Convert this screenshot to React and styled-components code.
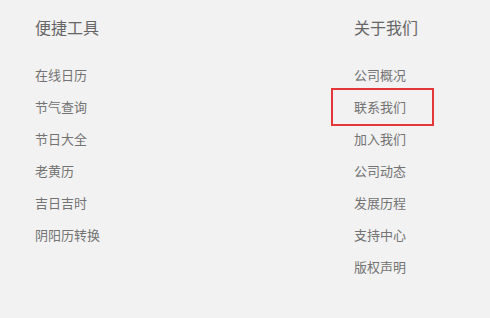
import styled, { createGlobalStyle } from "styled-components";

const GlobalStyle = createGlobalStyle`
  html, body {
    margin: 0;
    padding: 0;
    background: #f2f2f2;
  }
  body {
    font-family: "Noto Sans CJK SC", "Noto Sans", sans-serif;
  }
`;

const tools = ["在线日历", "节气查询", "节日大全", "老黄历", "吉日吉时", "阴阳历转换"];
const about = ["公司概况", "联系我们", "加入我们", "公司动态", "发展历程", "支持中心", "版权声明"];

const Footer = () => {
  return (
    <Wrapper>
      <Column>
        <Heading>便捷工具</Heading>
        <List>
          {tools.map((t) => (
            <Item key={t}>
              <Link>{t}</Link>
            </Item>
          ))}
        </List>
      </Column>
      <Column>
        <Heading>关于我们</Heading>
        <List>
          {about.map((t) => (
            <Item key={t}>
              <Link $marked={t === "联系我们"}>{t}</Link>
            </Item>
          ))}
        </List>
      </Column>
    </Wrapper>
  );
};

const Wrapper = styled.footer`
  display: grid;
  grid-template-columns: 319px 1fr;
  padding: 15px 0 0 35px;
  height: 318px;
  box-sizing: border-box;
`;

const Column = styled.div`
  display: flex;
  flex-direction: column;
`;

const Heading = styled.h3`
  margin: 0 0 20px;
  font-size: 16px;
  line-height: 24px;
  font-weight: 400;
  color: #666;
`;

const List = styled.ul`
  list-style: none;
  margin: 0;
  padding: 0;
`;

const Item = styled.li`
  font-size: 13px;
  line-height: 32px;
  height: 32px;
`;

const Link = styled.span`
  position: relative;
  display: inline-block;
  color: #737373;
  cursor: pointer;

  ${(p) =>
    p.$marked &&
    `
    &::after {
      content: "";
      position: absolute;
      top: -3px;
      bottom: -3px;
      left: -23px;
      right: -28px;
      border: 2px solid #e3373a;
    }
  `}
`;

export default function App() {
  return (
    <>
      <GlobalStyle />
      <Footer />
    </>
  );
}
